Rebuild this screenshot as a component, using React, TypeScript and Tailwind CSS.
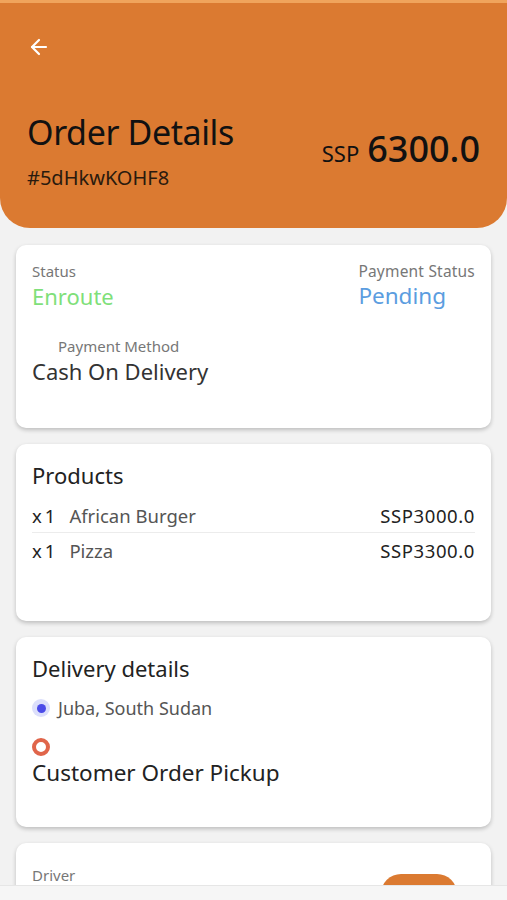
import {ArrowLeft} from 'lucide-react'

const font = {fontFamily: '"Noto Sans", "Liberation Sans", sans-serif'}

function Card({className, children}: {className?: string; children: React.ReactNode}) {
  return (
    <div
      className={`bg-white rounded-[10px] shadow-[0_2px_4px_rgba(0,0,0,0.22)] px-4 ${className ?? ''}`}
    >
      {children}
    </div>
  )
}

export default function App() {
  return (
    <div className="relative h-[900px] w-full overflow-hidden bg-[#f2f2f2]" style={font}>
      {/* Header */}
      <header className="bg-[#db7a31] h-[228px] rounded-b-[30px] border-t-[3px] border-[#f0a45c] px-[27px] flex flex-col">
        <button className="mt-[32px] w-[22px] h-[22px] text-white">
          <ArrowLeft size={24} strokeWidth={2.2} />
        </button>
        <div className="mt-[55px] flex items-end justify-between">
          <div>
            <h1 className="text-[34px] leading-[40px] text-[#111] tracking-[-0.4px]">Order Details</h1>
            <p className="text-[20px] leading-[28px] text-[#2a1a0e] mt-[12px]">#5dHkwKOHF8</p>
          </div>
          <div className="flex items-baseline gap-[8px] mb-[22px] text-[#111]">
            <span className="text-[22px]">SSP</span>
            <span className="text-[36px] font-medium leading-[40px]">6300.0</span>
          </div>
        </div>
      </header>

      <main className="px-4 pt-[17px] flex flex-col gap-4">
        {/* Status */}
        <Card className="h-[183px] pt-[16px]">
          <div className="flex justify-between">
            <div>
              <p className="text-[15px] leading-[20px] text-[#777]">Status</p>
              <p className="text-[22px] leading-[30px] text-[#7fe07a]">Enroute</p>
            </div>
            <div>
              <p className="text-[15.5px] leading-[20px] text-[#777] tracking-[0.2px]">Payment Status</p>
              <p className="text-[22.5px] leading-[30px] text-[#5b9de0]">Pending</p>
            </div>
          </div>
          <p className="mt-[25px] ml-[26px] text-[15px] leading-[20px] text-[#777]">Payment Method</p>
          <p className="text-[22px] leading-[30px] text-[#333]">Cash On Delivery</p>
        </Card>

        {/* Products */}
        <Card className="h-[177px] pt-[16px]">
          <h2 className="text-[22px] leading-[30px] text-[#222]">Products</h2>
          <div className="mt-[10px]">
            <div className="flex justify-between items-center h-[33px] border-b border-[#ececec] text-[18.5px]">
              <div className="flex gap-[11px]">
                <span className="text-[#222] tracking-[3px]">x1</span>
                <span className="text-[#555]">African Burger</span>
              </div>
              <span className="text-[#222] tracking-[0.6px]">SSP3000.0</span>
            </div>
            <div className="flex justify-between items-center h-[36px] text-[18.5px]">
              <div className="flex gap-[11px]">
                <span className="text-[#222] tracking-[3px]">x1</span>
                <span className="text-[#555]">Pizza</span>
              </div>
              <span className="text-[#222] tracking-[0.6px]">SSP3300.0</span>
            </div>
          </div>
        </Card>

        {/* Delivery */}
        <Card className="h-[190px] pt-[16px]">
          <h2 className="text-[22px] leading-[30px] text-[#222]">Delivery details</h2>
          <div className="mt-[12px] flex items-center gap-[8px]">
            <span className="w-[18px] h-[18px] rounded-full bg-[#dcdffb] flex items-center justify-center">
              <span className="w-[9px] h-[9px] rounded-full bg-[#4b4be8]" />
            </span>
            <span className="text-[18px] leading-[26px] text-[#555]">Juba, South Sudan</span>
          </div>
          <span className="mt-[17px] block w-[18px] h-[18px] rounded-full border-[4px] border-[#e0654a]" />
          <p className="mt-[2px] text-[22.5px] leading-[30px] text-[#222]">Customer Order Pickup</p>
        </Card>

        {/* Driver */}
        <Card className="h-[120px] pt-[22px] relative">
          <p className="text-[15px] leading-[20px] text-[#777]">Driver</p>
          <div className="absolute right-[34px] top-[31px] w-[76px] h-[40px] rounded-full bg-[#db7a31]" />
        </Card>
      </main>

      <div className="absolute bottom-0 left-0 right-0 h-[15px] bg-[#f6f6f6] border-t border-[#e6e6e6]" />
    </div>
  )
}
